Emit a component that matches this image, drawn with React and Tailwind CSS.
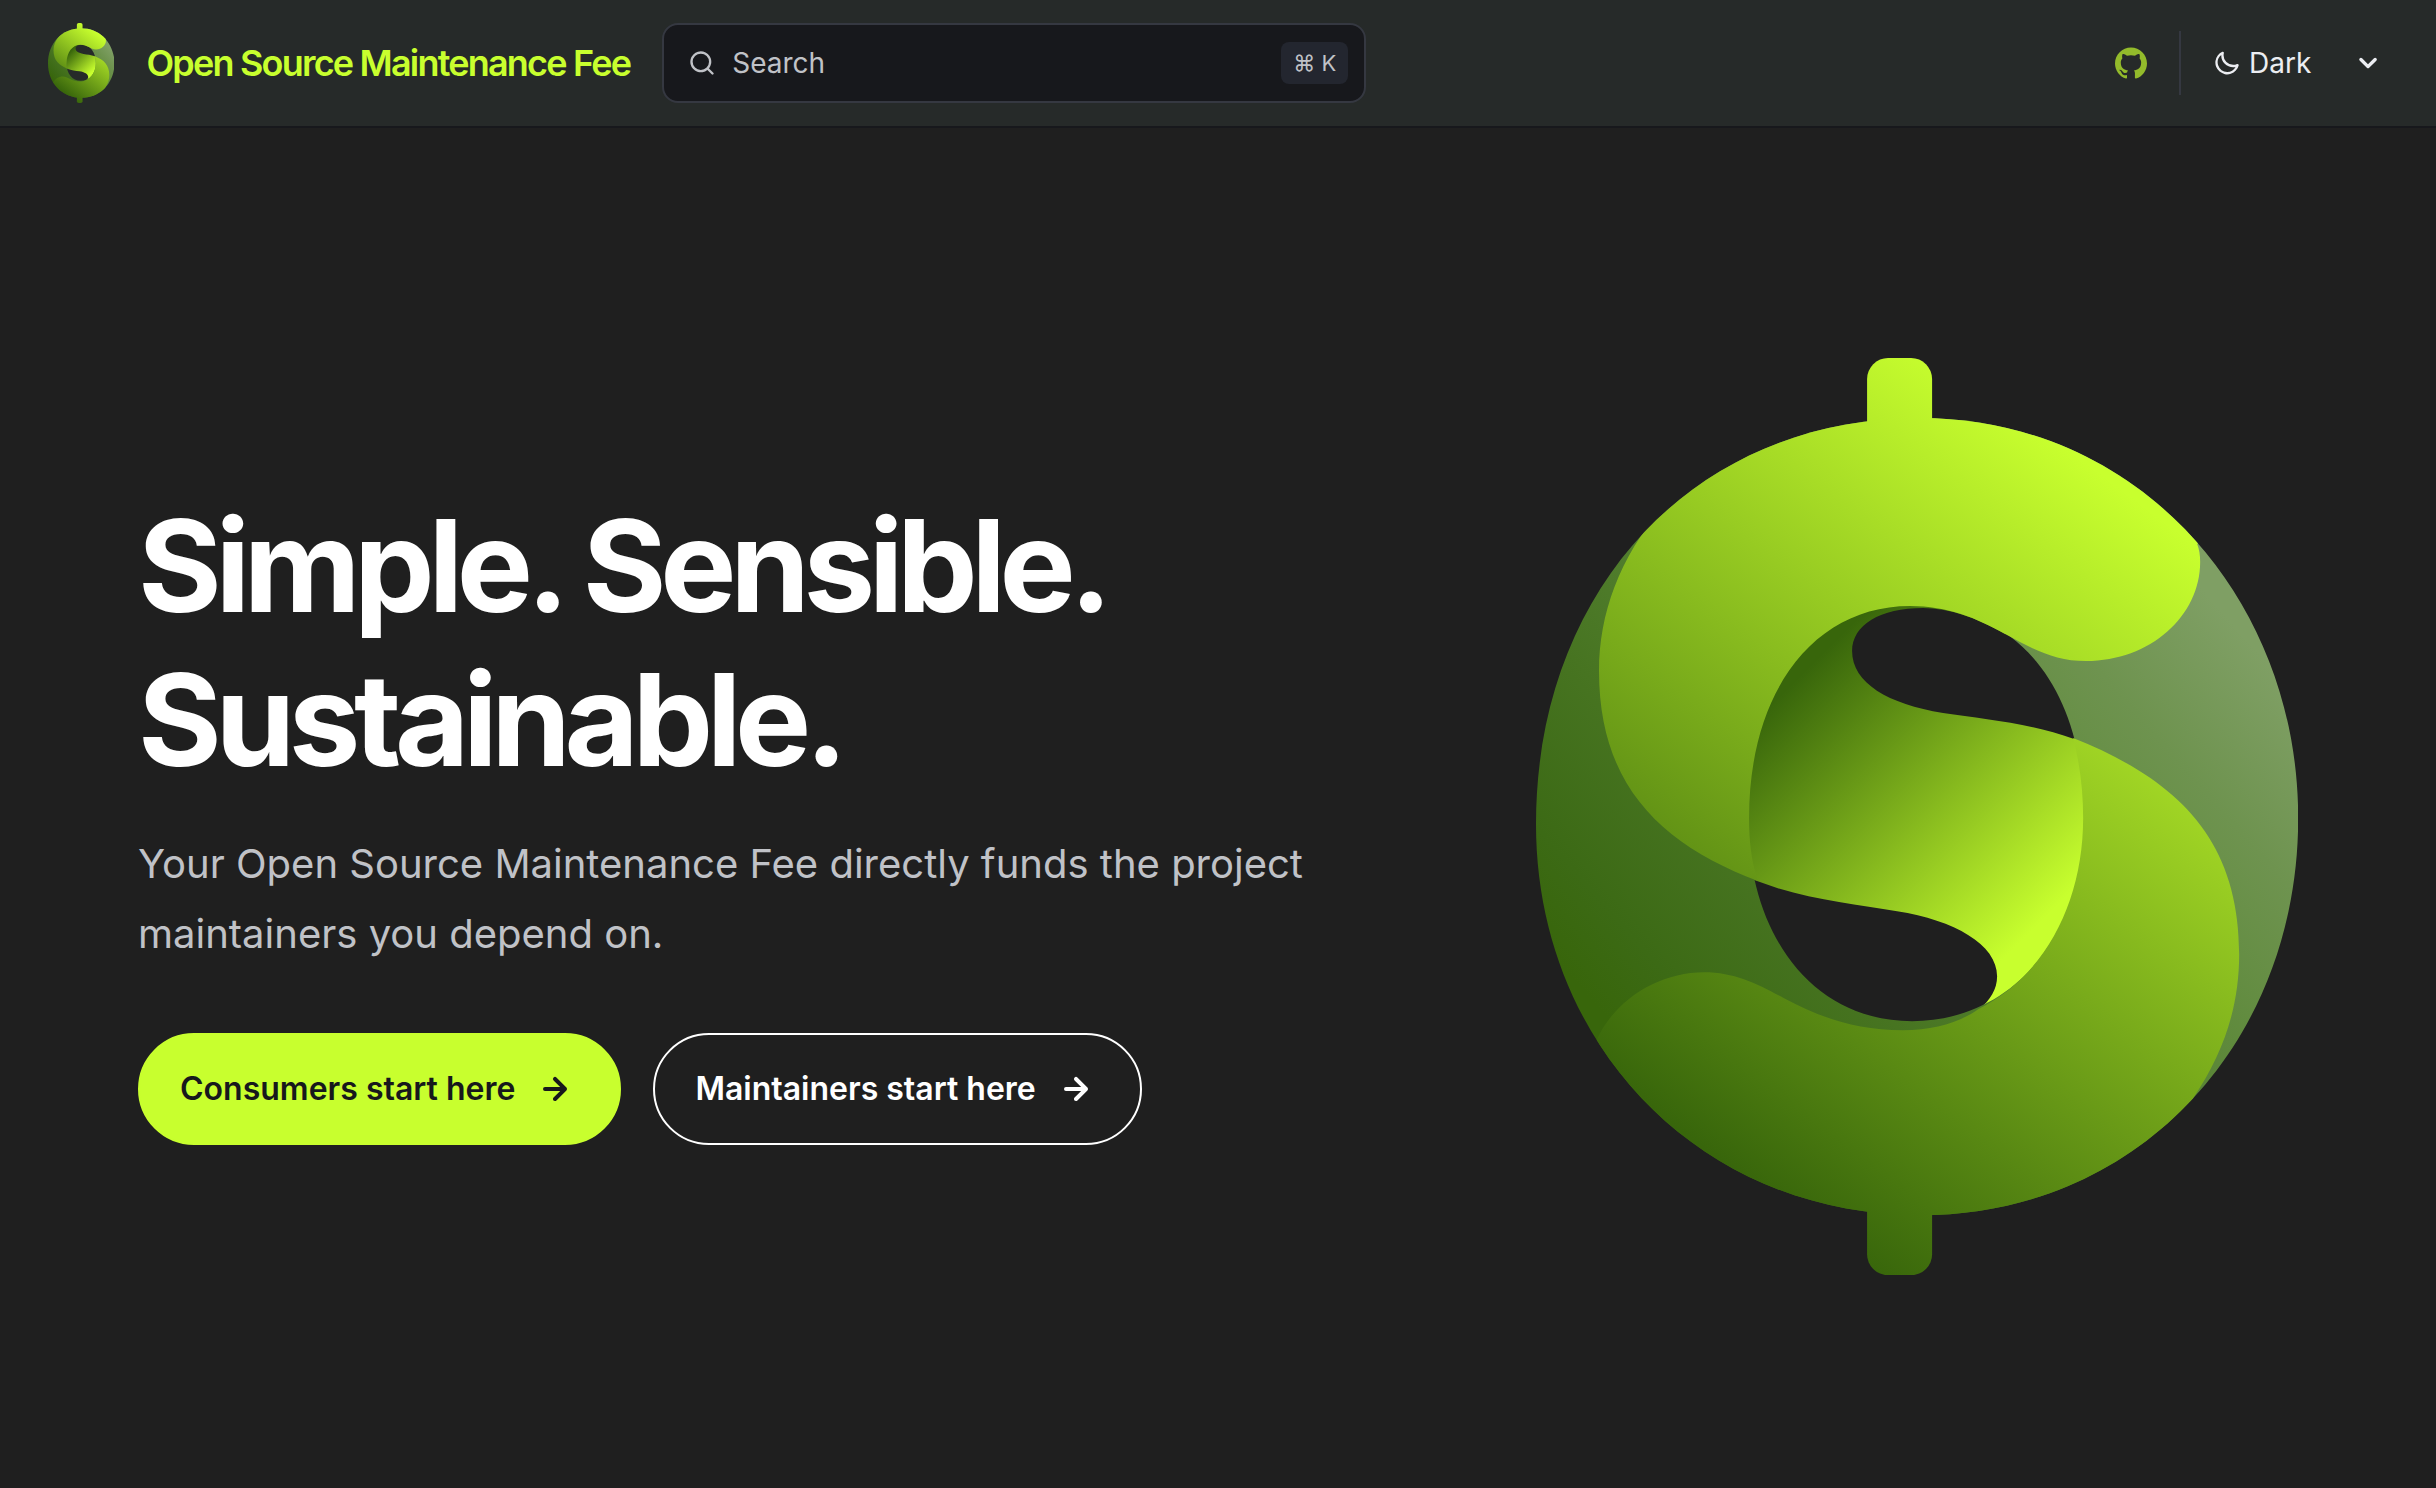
import React, { useId } from 'react';
import { SiGithub } from 'react-icons/si';

const OUTER = 'M384 60C602 60 762 240 762 460C762 682 604 857 384 857C164 857 0 686 0 466C0 232 158 60 384 60Z';
const HOLE = 'M374 247C486 247 548 336 548 460C548 575 478 663 376 663C275 663 212 575 212 460C212 332 278 247 374 247Z';

const Logo = ({ className }) => {
  const id = useId();

  return (
    <svg viewBox="0 0 762 917" className={className} aria-hidden="true">
      <defs>
        <linearGradient id={`${id}s`} gradientUnits="userSpaceOnUse" x1="574" y1="123" x2="108" y2="744">
          <stop stopColor="#c8ff2e" />
          <stop offset="1" stopColor="#38660b" />
        </linearGradient>
        <linearGradient id={`${id}ring`} gradientUnits="userSpaceOnUse" x1="694" y1="263" x2="146" y2="745">
          <stop stopColor="#7f9f64" />
          <stop offset="0.18" stopColor="#6e934f" />
          <stop offset="0.38" stopColor="#5f8a3c" />
          <stop offset="0.55" stopColor="#517e2e" />
          <stop offset="0.71" stopColor="#477421" />
          <stop offset="0.9" stopColor="#3c6a15" />
          <stop offset="1" stopColor="#38660b" />
        </linearGradient>
        <linearGradient id={`${id}mid`} gradientUnits="userSpaceOnUse" x1="249" y1="333" x2="492" y2="576">
          <stop stopColor="#38660b" />
          <stop offset="1" stopColor="#c8ff2e" />
        </linearGradient>
        <clipPath id={`${id}clip`}>
          <path d={OUTER} />
        </clipPath>
      </defs>
      {/* Middle fold */}
      <path
        fill={`url(#${id}mid)`}
        d="M560 390L538 381C494 365 447 361 407 355C352 346 316 325 316 293C316 267 344 250 387 250C412 250 440 259 469 276V240H374L270 270L200 380L200 515L221 523C268 541 318 546 361 553C418 562 461 586 461 618C461 631 454 642 443 651L500 625L560 500Z"
      />
      {/* Back ring */}
      <path fill={`url(#${id}ring)`} fillRule="evenodd" d={`${OUTER}${HOLE}`} />
      {/* Bars and the two arms of the S */}
      <g fill={`url(#${id}s)`}>
        <path d="M331 75V21A21 21 0 0 1 352 0H375A21 21 0 0 1 396 21V75Z" />
        <path d="M331 840V896A21 21 0 0 0 352 917H375A21 21 0 0 0 396 896V840Z" />
        <g clipPath={`url(#${id}clip)`}>
          <path d="M128 148C84 198 63 255 63 313C63 430 128 487 222 523C215 503 213 482 213 460C213 332 279 248 374 248C412 248 440 260 469 276C497 291 518 303 550 303C614 303 664 258 664 204C664 197 663 191 661 186L760 120L700 0H50L100 100Z" />
          <path d="M657 740C688 694 703 648 703 596C703 480 640 421 537 380C544 407 547 433 547 460C547 544 509 618 442 651C424 664 398 672 367 672C320 672 286 660 248 640C222 626 199 614 168 614C124 614 80 640 61 681L0 760L100 917H700V780Z" />
        </g>
      </g>
    </svg>
  );
};

const MagnifierIcon = ({ className }) => (
  <svg viewBox="0 0 24 24" fill="currentColor" className={className} aria-hidden="true">
    <path d="M21.71 20.29 18 16.61A9 9 0 1 0 16.61 18l3.68 3.68a1 1 0 0 0 1.42 0 1 1 0 0 0 0-1.39ZM11 18a7 7 0 1 1 0-14 7 7 0 0 1 0 14Z" />
  </svg>
);

const MoonIcon = ({ className }) => (
  <svg viewBox="0 0 24 24" fill="currentColor" className={className} aria-hidden="true">
    <path d="M21.64 13a1 1 0 0 0-1.05-.14 8.05 8.05 0 0 1-3.37.73 8.15 8.15 0 0 1-8.14-8.1 8.59 8.59 0 0 1 .25-2A1 1 0 0 0 8 2.36a10.14 10.14 0 1 0 14 11.69 1 1 0 0 0-.36-1.05Zm-9.5 6.69A8.14 8.14 0 0 1 7.08 5.22v.27a10.15 10.15 0 0 0 10.14 10.14 9.79 9.79 0 0 0 2.1-.22 8.11 8.11 0 0 1-7.18 4.32v-.04Z" />
  </svg>
);

const CaretIcon = ({ className }) => (
  <svg viewBox="0 0 24 24" fill="currentColor" className={className} aria-hidden="true">
    <path d="M17 9.17a1 1 0 0 0-1.41 0L12 12.71 8.46 9.17a1 1 0 1 0-1.41 1.42l4.24 4.24a1 1 0 0 0 1.42 0L17 10.59a1 1 0 0 0 0-1.42Z" />
  </svg>
);

const ArrowIcon = ({ className }) => (
  <svg viewBox="0 0 24 24" fill="currentColor" className={className} aria-hidden="true">
    <path d="M17.92 11.62a1 1 0 0 0-.21-.33l-5-5a1 1 0 1 0-1.42 1.42l3.3 3.29H7a1 1 0 0 0 0 2h7.59l-3.3 3.29a1 1 0 0 0 .33 1.64 1 1 0 0 0 1.09-.22l5-5a1 1 0 0 0 .21-.33 1 1 0 0 0 0-.76Z" />
  </svg>
);

const Header = () => (
  <header className="border-b-2 border-[#17181c] bg-[#262a29] px-12">
    <div className="flex h-[126px] items-center gap-8">
      <a href="/" className="flex items-center gap-8 text-4xl font-semibold tracking-tighter whitespace-nowrap text-[#c8ff2e]">
        <Logo className="h-20 w-auto" />
        Open Source Maintenance Fee
      </a>

      <label className="flex h-20 w-full max-w-[704px] items-center gap-4 rounded-2xl border-2 border-[#353841] bg-[#17181c] pr-4 pl-6 text-[#c0c2c7]">
        <MagnifierIcon className="size-7 shrink-0" />
        <input
          type="search"
          aria-label="Search"
          placeholder="Search"
          className="min-w-0 flex-1 bg-transparent text-[28px] outline-none placeholder:text-[#c0c2c7]"
        />
        <kbd className="rounded-lg bg-[#23262f] px-3 font-[Inter,sans-serif] text-[22px] leading-[42px]">⌘ K</kbd>
      </label>

      <div className="ml-auto flex items-center gap-8 text-[#eceef2]">
        <a href="https://github.com" aria-label="GitHub" className="text-[#93bb2b]">
          <SiGithub className="size-8" />
        </a>
        <div className="flex h-16 items-center border-l-2 border-[#353841] pl-8">
          <label className="grid grid-cols-[28px_1fr_40px] items-center">
            <MoonIcon className="col-start-1 row-start-1 size-7" />
            <select
              aria-label="Select theme"
              className="col-span-3 col-start-1 row-start-1 w-[175px] appearance-none bg-transparent pl-9 text-[28px] outline-none"
            >
              <option>Dark</option>
              <option>Light</option>
              <option>Auto</option>
            </select>
            <CaretIcon className="pointer-events-none col-start-3 row-start-1 size-10" />
          </label>
        </div>
      </div>
    </div>
  </header>
);

const App = () => {
  return (
    <div className="min-h-screen bg-[#1f1f1f] font-[Inter,sans-serif] text-white">
      <Header />

      {/* Hero */}
      <main className="mx-auto grid max-w-[2160px] grid-cols-[7fr_4fr] items-center gap-16 pt-[230px] pb-48">
        <div>
          <h1 className="max-w-[1100px] text-[128px] leading-[154px] font-bold tracking-tighter">
            Simple. Sensible. Sustainable.
          </h1>
          <p className="mt-8 text-[40px] leading-[70px] text-[#c0c2c7]">
            Your Open Source Maintenance Fee directly funds the project maintainers you depend on.
          </p>
          <div className="mt-16 flex gap-8 text-[32px] leading-9 font-semibold">
            <a
              href="/consumers"
              className="flex h-28 items-center gap-4 rounded-full border-2 border-[#c8ff2e] bg-[#c8ff2e] px-10 text-[#17181c]"
            >
              Consumers start here
              <ArrowIcon className="size-12" />
            </a>
            <a href="/maintainers" className="flex h-28 items-center gap-4 rounded-full border-2 border-white px-10">
              Maintainers start here
              <ArrowIcon className="size-12" />
            </a>
          </div>
        </div>
        <Logo className="w-full" />
      </main>
    </div>
  );
};

export default App;
